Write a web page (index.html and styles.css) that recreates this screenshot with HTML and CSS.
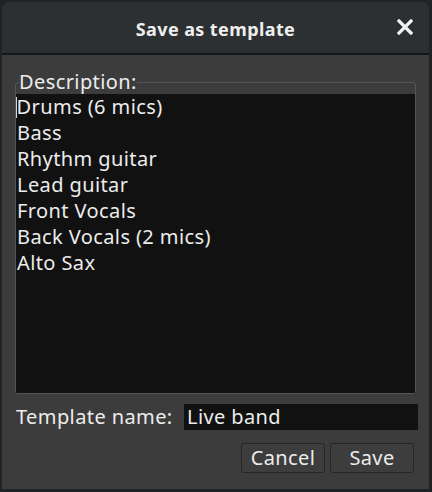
FILE: index.html
```html
<!DOCTYPE html>
<html>
<head>
<meta charset="utf-8">
<link rel="stylesheet" href="styles.css">
</head>
<body>
<div class="window">
  <div class="titlebar">
    <span class="title">Save as template</span>
    <span class="close">
      <svg width="16" height="16" viewBox="0 0 16 16"><path d="M2 2 L14 14 M14 2 L2 14" stroke="#f2f2f2" stroke-width="3.2" stroke-linecap="square" fill="none"/></svg>
    </span>
  </div>
  <div class="content">
    <fieldset class="frame">
      <legend class="legend">Description:</legend>
      <div class="list">
        <div class="item"><span class="caret"></span>Drums (6 mics)</div>
        <div class="item">Bass</div>
        <div class="item">Rhythm guitar</div>
        <div class="item">Lead guitar</div>
        <div class="item">Front Vocals</div>
        <div class="item">Back Vocals (2 mics)</div>
        <div class="item">Alto Sax</div>
      </div>
    </fieldset>
    <div class="name-row">
      <span class="name-label">Template name:</span>
      <div class="name-input">Live band</div>
    </div>
    <div class="buttons">
      <div class="btn">Cancel</div>
      <div class="btn">Save</div>
    </div>
  </div>
</div>
</body>
</html>
```

FILE: styles.css
```css
html, body {
  margin: 0;
  padding: 0;
  background: #1f2323;
}
body {
  width: 432px;
  height: 492px;
  font-family: "Noto Sans", "DejaVu Sans", sans-serif;
  color: #ececec;
  letter-spacing: 0.4px;
}
.window {
  margin: 2px 0 0 2px;
  width: 427px;
  height: 487px;
  background: #3c3c3c;
  border-radius: 8px 8px 0 0;
  overflow: hidden;
  display: flex;
  flex-direction: column;
}
.titlebar {
  height: 51px;
  flex: none;
  background: #2c3032;
  border-bottom: 2px solid #141616;
  display: flex;
  align-items: center;
  justify-content: center;
  position: relative;
}
.title {
  font-weight: bold;
  font-size: 18px;
  color: #eeeeee;
  margin-top: 2px;
}
.close {
  position: absolute;
  right: 16px;
  top: 17px;
  width: 16px;
  height: 16px;
  display: flex;
}
.content {
  flex: 1;
  padding: 15px 13px 0 13px;
  display: flex;
  flex-direction: column;
}
.frame {
  margin: 0;
  padding: 0;
  border: 1px solid #555555;
  border-radius: 3px;
  min-width: 0;
}
.legend {
  padding: 0;
  margin-left: 3px;
  font-size: 20px;
  line-height: 24px;
  color: #ececec;
}
.list {
  height: 299px;
  background: #111111;
  padding-left: 1px;
}
.item {
  font-size: 20px;
  line-height: 26px;
  height: 26px;
  white-space: nowrap;
}
.caret {
  display: inline-block;
  width: 1px;
  height: 21px;
  margin-left: -1px;
  margin-right: -0.4px;
  background: #d8d8d8;
  vertical-align: -4px;
}
.name-row {
  display: flex;
  align-items: center;
  margin-top: 9px;
  margin-right: -2px;
}
.name-label {
  font-size: 20px;
  padding-left: 1px;
  width: 168px;
  flex: none;
  white-space: nowrap;
}
.name-input {
  flex: 1;
  height: 26px;
  background: #111111;
  font-size: 20px;
  line-height: 26px;
  padding-left: 3px;
}
.buttons {
  display: flex;
  justify-content: flex-end;
  gap: 5px;
  margin-top: 13px;
  margin-right: 2px;
}
.btn {
  width: 82px;
  height: 28px;
  border: 1px solid #262626;
  border-radius: 3px;
  background: #3d3d3d;
  font-size: 20px;
  line-height: 28px;
  text-align: center;
  color: #ececec;
}
```
